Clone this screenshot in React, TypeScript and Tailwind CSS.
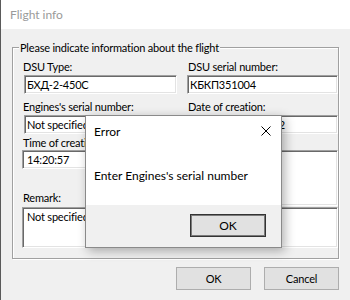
import React from "react";

const inputCls =
  "bg-white border border-t-[#a0a0a0] border-l-[#a0a0a0] border-r-white border-b-white shadow-[inset_1px_1px_0_#696969,inset_-1px_-1px_0_#e3e3e3] overflow-hidden whitespace-nowrap";

function Field({ value, className = "" }: { value: string; className?: string }) {
  return (
    <div className={`${inputCls} h-[19px] flex items-center pl-[2px] ${className}`}>
      <span className="leading-[15px]">{value}</span>
    </div>
  );
}

function Label({ text }: { text: string }) {
  return <div className="leading-[15px] pl-[1px] whitespace-nowrap">{text}</div>;
}

export default function App() {
  return (
    <div className="relative w-[350px] h-[300px] overflow-hidden bg-[#f0f0f0] border-l border-[#5a5a5a] font-['Lato',sans-serif] text-[11px] tracking-[-0.2px] text-black">
      <div className="h-[29px] bg-white flex items-center pl-[9px] text-[12px] tracking-normal text-[#9a9a9a]">Flight info</div>

      <div className="relative mt-[18px] ml-[11px] w-[327px] h-[212px] border border-[#a0a0a0] shadow-[inset_1px_1px_0_#fff,1px_1px_0_#fff]">
        <span className="absolute left-[6px] top-[-8px] bg-[#f0f0f0] px-[1px] leading-[15px] whitespace-nowrap">
          Please indicate information about the flight
        </span>
        <div className="pt-[11px] pl-[9px] flex flex-col">
          <div className="flex gap-[10px]">
            <div className="w-[155px] flex flex-col">
              <Label text="DSU Type:" />
              <Field value="БХД-2-450С" className="mt-[1px] ml-[2px] w-[153px]" />
            </div>
            <div className="w-[151px] flex flex-col">
              <Label text="DSU serial number:" />
              <Field value="КБКП351004" className="mt-[1px] w-[151px]" />
            </div>
          </div>
          <div className="flex gap-[10px] mt-[5px]">
            <div className="w-[155px] flex flex-col">
              <Label text="Engines's serial number:" />
              <Field value="Not specified" className="mt-[1px] ml-[2px] w-[153px]" />
            </div>
            <div className="w-[151px] flex flex-col">
              <Label text="Date of creation:" />
              <Field value="14 September, 2022" className="mt-[1px] w-[151px]" />
            </div>
          </div>
          <div className="flex gap-[10px]">
            <div className="w-[155px] flex flex-col">
              <div className="mt-[1px]">
                <Label text="Time of creation:" />
              </div>
              <Field value="14:20:57" className="w-[155px] pl-[4px]" />
              <div className="mt-[21px]">
                <Label text="Remark:" />
              </div>
            </div>
            <div className={`${inputCls} w-[151px] h-[56px] mt-[16px]`} />
          </div>
          <div className={`${inputCls} mt-[1px] w-[316px] h-[41px] pl-[4px] pt-[1px] leading-[15px]`}>
            Not specified
          </div>
        </div>
      </div>

      <div className="flex justify-end gap-[13px] pr-[11px] mt-[8px]">
        <button className="w-[75px] h-[23px] bg-[#e1e1e1] border border-[#adadad] leading-[15px]">OK</button>
        <button className="w-[75px] h-[23px] bg-[#e1e1e1] border border-[#adadad] leading-[15px]">Cancel</button>
      </div>

      <div className="absolute left-[84px] top-[115px] w-[197px] h-[133px] border border-[#8a8a8a] bg-white text-[12px] tracking-normal shadow-[3px_3px_10px_rgba(0,0,0,0.3)] flex flex-col">
        <div className="h-[30px] flex items-center justify-between pl-[8px] pr-[10px]">
          <span className="leading-[15px]">Error</span>
          <svg width="10" height="10" viewBox="0 0 10 10" className="mt-[-1px]">
            <path d="M0.5 0.5 L9.5 9.5 M9.5 0.5 L0.5 9.5" stroke="#000" strokeWidth="1" />
          </svg>
        </div>
        <div className="flex-1 pl-[8px] pt-[22px]">
          <div className="leading-[15px] whitespace-nowrap">Enter Engines's serial number</div>
        </div>
        <div className="h-[42px] bg-[#f0f0f0] flex justify-end pr-[15px] pt-[9px]">
          <button className="w-[76px] h-[23px] bg-[#e1e1e1] border border-[#333] shadow-[inset_0_0_0_1px_#7a7a7a] leading-[15px]">
            OK
          </button>
        </div>
      </div>
    </div>
  );
}
